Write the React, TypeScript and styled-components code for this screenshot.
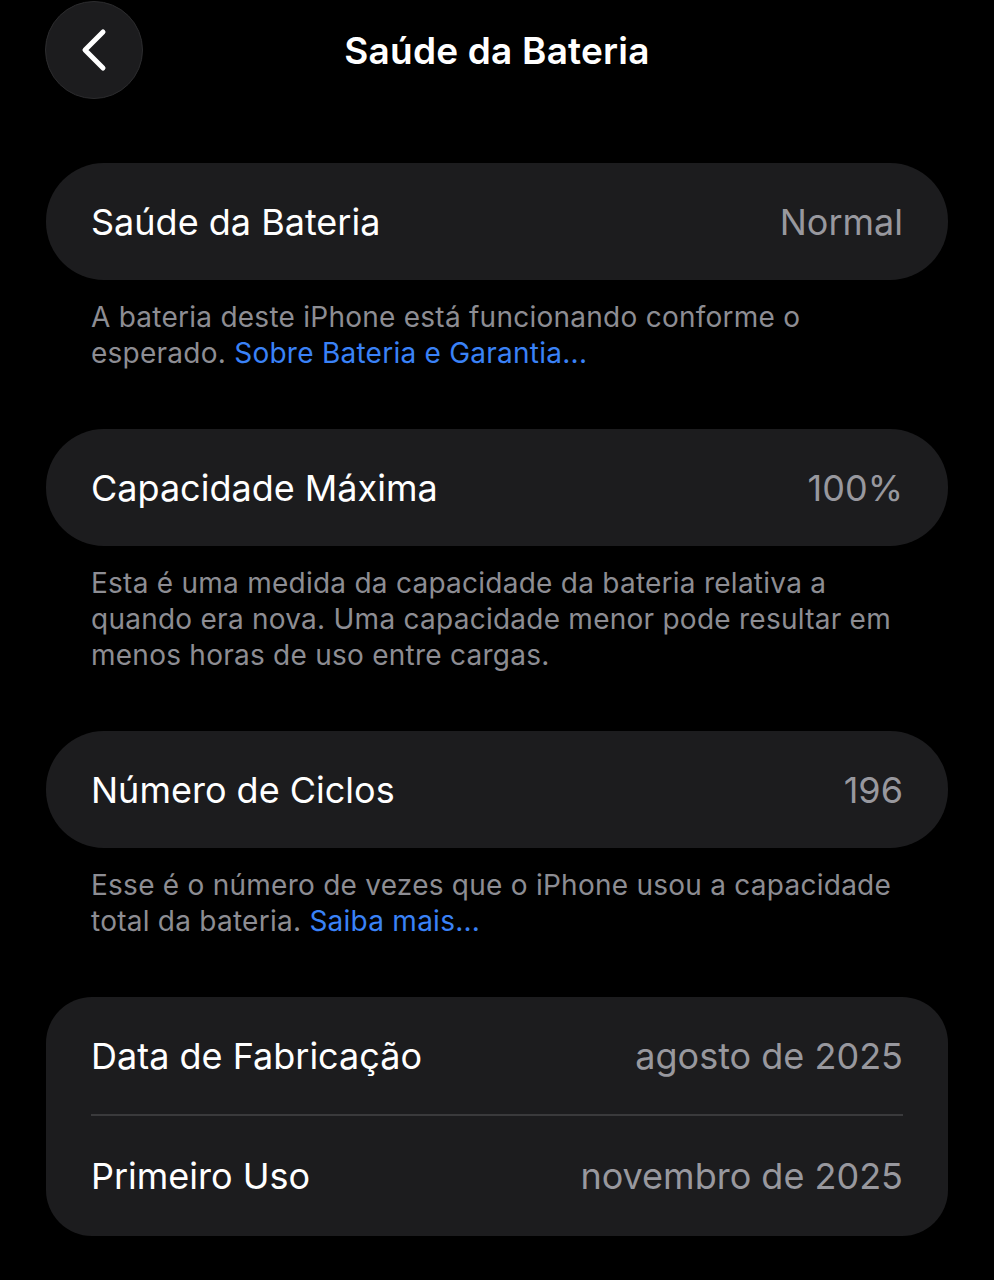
import React from "react";
import styled, { createGlobalStyle } from "styled-components";

const Global = createGlobalStyle`
  html, body { margin: 0; padding: 0; background: #000; }
  body { font-family: Inter, "Noto Sans", "Liberation Sans", sans-serif; -webkit-font-smoothing: antialiased; }
`;

const Page = styled.div`
  width: 994px;
  min-height: 1280px;
  background: #000;
  color: #fff;
  box-sizing: border-box;
  padding: 0 46px 0 46px;
  display: flex;
  flex-direction: column;
`;

const NavBar = styled.div`
  height: 100px;
  display: grid;
  grid-template-columns: 100px 1fr 100px;
  align-items: center;
`;

const BackButton = styled.button`
  width: 98px;
  height: 98px;
  margin-left: -1px;
  border-radius: 50%;
  background: #1c1c1e;
  border: 1.5px solid #2c2c2e;
  display: flex;
  align-items: center;
  justify-content: center;
  padding: 0;
  color: #fff;
`;

const Title = styled.h1`
  margin: 0;
  text-align: center;
  font-size: 37px;
  font-weight: 600;
  letter-spacing: 0.2px;
`;

const Sections = styled.div`
  display: flex;
  flex-direction: column;
  padding-top: 63px;
`;

const Card = styled.div<{ $radius?: number }>`
  background: #1c1c1e;
  border-radius: ${(p) => p.$radius ?? 58}px;
  padding: 0 45px;
  display: flex;
  flex-direction: column;
`;

const Row = styled.div<{ $divider?: boolean; $height?: number }>`
  height: ${(p) => p.$height ?? 117}px;
  display: flex;
  align-items: center;
  justify-content: space-between;
  font-size: 36px;
  border-bottom: ${(p) => (p.$divider ? "2px solid #3a3a3c" : "none")};
`;

const Label = styled.span`
  color: #fff;
`;

const Value = styled.span`
  color: #98989e;
`;

const Footer = styled.p`
  margin: 19px 45px 58px 45px;
  font-size: 28px;
  line-height: 36px;
  letter-spacing: 0.25px;
  color: #8d8d93;
`;

const Link = styled.a`
  color: #3a82f7;
  text-decoration: none;
`;

export default function App() {
  return (
    <>
      <Global />
      <Page>
        <NavBar>
          <BackButton aria-label="Voltar">
            <svg width="30" height="44" viewBox="0 0 30 44" fill="none">
              <path d="M24 4 L6 22 L24 40" stroke="#fff" strokeWidth="5" strokeLinecap="round" strokeLinejoin="round" />
            </svg>
          </BackButton>
          <Title>Saúde da Bateria</Title>
          <div />
        </NavBar>
        <Sections>
          <Card>
            <Row>
              <Label>Saúde da Bateria</Label>
              <Value>Normal</Value>
            </Row>
          </Card>
          <Footer>
            A bateria deste iPhone está funcionando conforme o esperado.{" "}
            <Link href="#">Sobre Bateria e Garantia...</Link>
          </Footer>
          <Card>
            <Row>
              <Label>Capacidade Máxima</Label>
              <Value>100%</Value>
            </Row>
          </Card>
          <Footer>
            Esta é uma medida da capacidade da bateria relativa a quando era nova. Uma capacidade menor pode resultar em menos horas de uso entre cargas.
          </Footer>
          <Card>
            <Row>
              <Label>Número de Ciclos</Label>
              <Value>196</Value>
            </Row>
          </Card>
          <Footer>
            Esse é o número de vezes que o iPhone usou a capacidade total da bateria.{" "}
            <Link href="#">Saiba mais...</Link>
          </Footer>
          <Card $radius={46}>
            <Row $divider>
              <Label>Data de Fabricação</Label>
              <Value>agosto de 2025</Value>
            </Row>
            <Row $height={120}>
              <Label>Primeiro Uso</Label>
              <Value>novembro de 2025</Value>
            </Row>
          </Card>
        </Sections>
      </Page>
    </>
  );
}
